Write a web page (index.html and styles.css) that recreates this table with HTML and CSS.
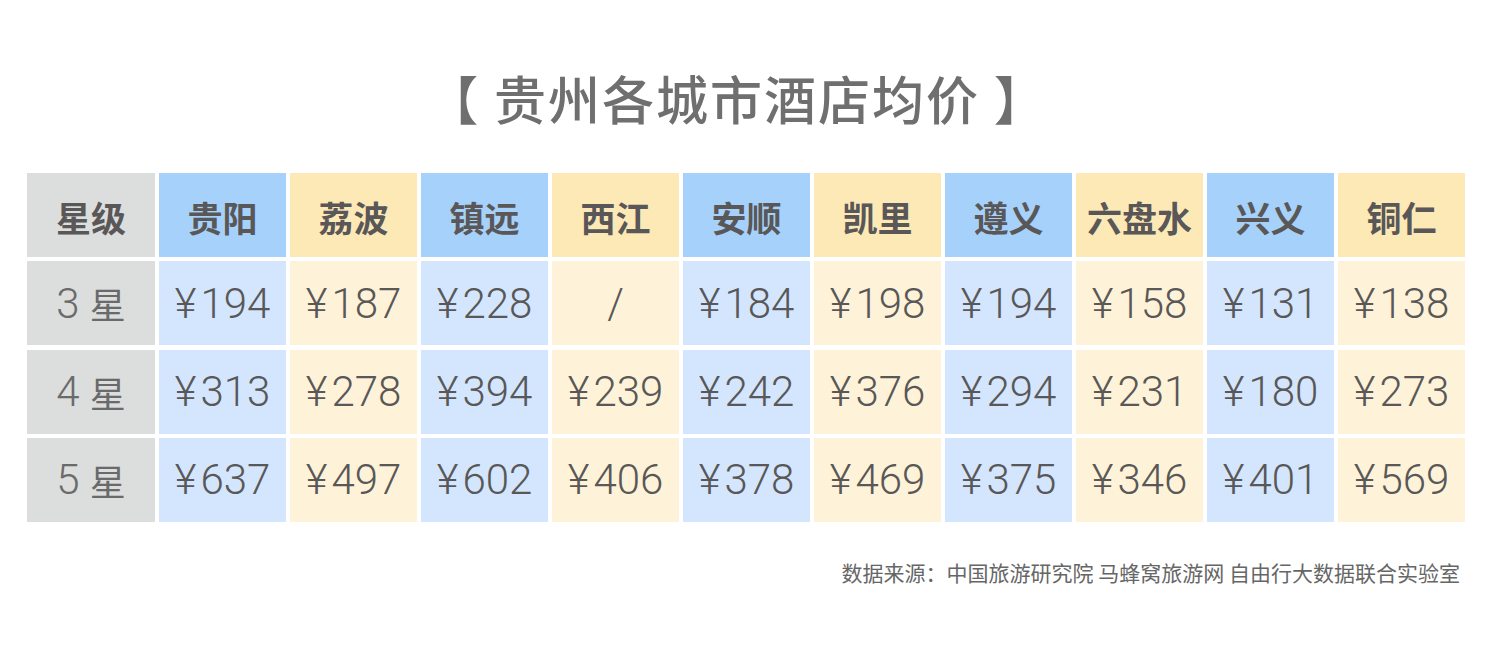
FILE: index.html
```html
<!DOCTYPE html>
<html lang="zh">
<head>
<meta charset="utf-8">
<link rel="stylesheet" href="styles.css">
</head>
<body>
<div class="page">
  <h1 class="title">【 贵州各城市酒店均价 】</h1>
  <div class="table">
    <div class="cell head gray">星级</div>
    <div class="cell head blue">贵阳</div>
    <div class="cell head yellow">荔波</div>
    <div class="cell head blue">镇远</div>
    <div class="cell head yellow">西江</div>
    <div class="cell head blue">安顺</div>
    <div class="cell head yellow">凯里</div>
    <div class="cell head blue">遵义</div>
    <div class="cell head yellow">六盘水</div>
    <div class="cell head blue">兴义</div>
    <div class="cell head yellow">铜仁</div>

    <div class="cell label gray">3 <span class="cjk">星</span></div>
    <div class="cell num lblue"><span class="yen">¥</span>194</div>
    <div class="cell num lyellow"><span class="yen">¥</span>187</div>
    <div class="cell num lblue"><span class="yen">¥</span>228</div>
    <div class="cell num lyellow">/</div>
    <div class="cell num lblue"><span class="yen">¥</span>184</div>
    <div class="cell num lyellow"><span class="yen">¥</span>198</div>
    <div class="cell num lblue"><span class="yen">¥</span>194</div>
    <div class="cell num lyellow"><span class="yen">¥</span>158</div>
    <div class="cell num lblue"><span class="yen">¥</span>131</div>
    <div class="cell num lyellow"><span class="yen">¥</span>138</div>

    <div class="cell label gray">4 <span class="cjk">星</span></div>
    <div class="cell num lblue"><span class="yen">¥</span>313</div>
    <div class="cell num lyellow"><span class="yen">¥</span>278</div>
    <div class="cell num lblue"><span class="yen">¥</span>394</div>
    <div class="cell num lyellow"><span class="yen">¥</span>239</div>
    <div class="cell num lblue"><span class="yen">¥</span>242</div>
    <div class="cell num lyellow"><span class="yen">¥</span>376</div>
    <div class="cell num lblue"><span class="yen">¥</span>294</div>
    <div class="cell num lyellow"><span class="yen">¥</span>231</div>
    <div class="cell num lblue"><span class="yen">¥</span>180</div>
    <div class="cell num lyellow"><span class="yen">¥</span>273</div>

    <div class="cell label gray">5 <span class="cjk">星</span></div>
    <div class="cell num lblue"><span class="yen">¥</span>637</div>
    <div class="cell num lyellow"><span class="yen">¥</span>497</div>
    <div class="cell num lblue"><span class="yen">¥</span>602</div>
    <div class="cell num lyellow"><span class="yen">¥</span>406</div>
    <div class="cell num lblue"><span class="yen">¥</span>378</div>
    <div class="cell num lyellow"><span class="yen">¥</span>469</div>
    <div class="cell num lblue"><span class="yen">¥</span>375</div>
    <div class="cell num lyellow"><span class="yen">¥</span>346</div>
    <div class="cell num lblue"><span class="yen">¥</span>401</div>
    <div class="cell num lyellow"><span class="yen">¥</span>569</div>
  </div>
  <p class="source">数据来源：中国旅游研究院 马蜂窝旅游网 自由行大数据联合实验室</p>
</div>
</body>
</html>
```
FILE: styles.css
```css
html, body {
  margin: 0;
  padding: 0;
  background: #ffffff;
}
.page {
  width: 1500px;
  height: 657px;
  padding-top: 70px;
  box-sizing: border-box;
  font-family: "Noto Sans CJK SC", "Noto Sans", sans-serif;
}
.title {
  margin: 0;
  padding-right: 26px;
  height: 103px;
  text-align: center;
  font-size: 52px;
  line-height: 56px;
  font-weight: 500;
  color: #6f6f6f;
  letter-spacing: 2px;
}
.table {
  margin-left: 27px;
  display: grid;
  grid-template-columns: 128px repeat(10, 127px);
  grid-auto-rows: 84px;
  column-gap: 4px;
  row-gap: 4.3px;
}
.cell {
  display: flex;
  align-items: center;
  justify-content: center;
  color: #595757;
}
.head {
  font-size: 35px;
  font-weight: 700;
  padding-top: 2px;
  box-sizing: border-box;
}
.num, .label {
  font-family: "Roboto", "Liberation Sans", sans-serif;
  font-weight: 300;
  font-size: 42px;
}
.yen {
  margin-right: 4px;
}
.label .cjk {
  font-family: "Noto Sans CJK SC", sans-serif;
  font-weight: 400;
  font-size: 36px;
  margin-left: 10px;
}
.label {
  color: #6a6a6a;
}
.gray { background: #dcdddd; }
.blue { background: #a6d1fb; }
.yellow { background: #fde9b6; }
.lblue { background: #d3e6fd; }
.lyellow { background: #fef3d8; }
.source {
  margin: 38px 0 0 0;
  padding-right: 40px;
  text-align: right;
  font-size: 21px;
  line-height: 24px;
  color: #666666;
}
```
